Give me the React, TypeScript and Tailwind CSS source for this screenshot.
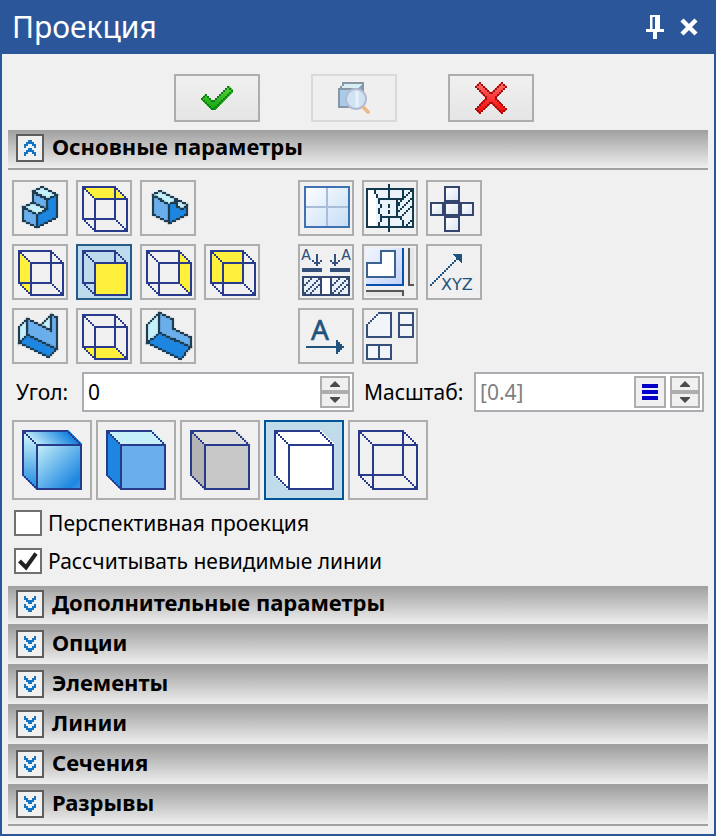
import React, { useState } from "react";

type Pt = [number, number];

/* Every drawing uses a coarse grid: one unit is two screen pixels. */

function cells(points: Pt[]): string {
  let d = "";
  for (let i = 0; i + 1 < points.length; i++) {
    let [x, y] = points[i];
    const [ex, ey] = points[i + 1];
    const dx = Math.abs(ex - x);
    const dy = -Math.abs(ey - y);
    const sx = x < ex ? 1 : -1;
    const sy = y < ey ? 1 : -1;
    let err = dx + dy;
    for (;;) {
      d += `M${x} ${y}h1v1h-1z`;
      if (x === ex && y === ey) break;
      const e2 = 2 * err;
      if (e2 >= dy) {
        err += dy;
        x += sx;
      }
      if (e2 <= dx) {
        err += dx;
        y += sy;
      }
    }
  }
  return d;
}

function Line({ pts, color }: { pts: Pt[]; color: string }) {
  return <path d={cells(pts)} fill={color} />;
}

function Box({ x, y, w, h, color, fill = "none" }: { x: number; y: number; w: number; h: number; color: string; fill?: string }) {
  return <rect x={x + 0.5} y={y + 0.5} width={w - 1} height={h - 1} fill={fill} stroke={color} />;
}

function Face({ pts, fill, edge }: { pts: Pt[]; fill: string; edge?: string }) {
  return (
    <g>
      <polygon points={pts.map(([x, y]) => `${x + 0.5},${y + 0.5}`).join(" ")} fill={fill} />
      {edge && (
        <>
          <polygon
            points={pts.map(([x, y]) => `${x + 0.5},${y + 0.5}`).join(" ")}
            fill="none"
            stroke={edge}
            strokeWidth={1.4}
            opacity={0.2}
            shapeRendering="auto"
          />
          <Line pts={[...pts, pts[0]]} color={edge} />
        </>
      )}
    </g>
  );
}

function Art({ w, h, className, children }: { w: number; h: number; className: string; children: React.ReactNode }) {
  return (
    <svg viewBox={`0 0 ${w} ${h}`} className={className} shapeRendering="crispEdges" aria-hidden="true">
      {children}
    </svg>
  );
}

const NAVY = "#283a8c";
const YELLOW = "#fff03c";
const INK = "#1f3c50";
const LIGHT = "#c6f0f9";
const MID = "#6aaeeb";
const DEEP = "#1c86e0";

function WireCube({ side }: { side: "top" | "left" | "front" | "right" | "back" | "bottom" }) {
  const faces: Record<string, Pt[]> = {
    top: [[2, 2], [18, 2], [24, 8], [8, 8]],
    left: [[2, 2], [8, 8], [8, 24], [2, 18]],
    front: [[8, 8], [24, 8], [24, 24], [8, 24]],
    right: [[18, 2], [24, 8], [24, 24], [18, 18]],
    back: [[2, 2], [18, 2], [18, 18], [2, 18]],
    bottom: [[2, 18], [18, 18], [24, 24], [8, 24]],
  };
  return (
    <>
      {side !== "front" && <Face pts={faces[side]} fill={YELLOW} />}
      <Box x={2} y={2} w={17} h={17} color={NAVY} />
      <Line pts={[[2, 2], [8, 8]]} color={NAVY} />
      <Line pts={[[18, 2], [24, 8]]} color={NAVY} />
      <Line pts={[[2, 18], [8, 24]]} color={NAVY} />
      <Line pts={[[18, 18], [24, 24]]} color={NAVY} />
      <Box x={8} y={8} w={17} h={17} color={NAVY} fill={side === "front" ? YELLOW : "none"} />
    </>
  );
}

function IsoStep() {
  return (
    <>
      <Face pts={[[16, 8], [21, 6], [21, 17], [11, 22], [11, 16], [16, 13]]} fill={DEEP} edge={INK} />
      <Face pts={[[9, 5], [16, 8], [16, 13], [9, 10]]} fill={MID} edge={INK} />
      <Face pts={[[9, 4], [14, 2], [21, 6], [16, 8]]} fill={LIGHT} edge={INK} />
      <Face pts={[[4, 12], [9, 10], [16, 13], [11, 16]]} fill={LIGHT} edge={INK} />
      <Face pts={[[4, 12], [11, 16], [11, 22], [4, 19]]} fill={MID} edge={INK} />
    </>
  );
}

function IsoNotch() {
  return (
    <>
      <Face pts={[[5, 6], [9, 4], [22, 11], [20, 13], [17, 12], [17, 9], [13, 11]]} fill={LIGHT} edge={INK} />
      <Face pts={[[5, 6], [13, 11], [13, 20], [5, 16]]} fill={MID} edge={INK} />
      <Face pts={[[13, 11], [16, 9], [17, 12], [20, 13], [22, 11], [22, 16], [13, 20]]} fill={DEEP} edge={INK} />
    </>
  );
}

function IsoVee() {
  return (
    <>
      <Face pts={[[13, 7], [18, 2], [18, 10]]} fill={LIGHT} edge={INK} />
      <Face pts={[[6, 4], [13, 7], [18, 10], [18, 2], [21, 3], [21, 19], [6, 12]]} fill={MID} edge={INK} />
      <Face pts={[[6, 12], [21, 19], [17, 23], [2, 16]]} fill={DEEP} edge={INK} />
      <Face pts={[[2, 8], [6, 4], [6, 12], [2, 16]]} fill={LIGHT} edge={INK} />
    </>
  );
}

function IsoEll() {
  return (
    <>
      <Face pts={[[8, 1], [15, 4], [15, 9], [24, 13], [24, 18], [8, 11]]} fill={MID} edge={INK} />
      <Face pts={[[8, 11], [24, 18], [19, 24], [2, 16]]} fill={DEEP} edge={INK} />
      <Face pts={[[2, 7], [8, 1], [8, 11], [2, 16]]} fill={LIGHT} edge={INK} />
    </>
  );
}

function WindowArt() {
  return (
    <>
      <defs>
        <linearGradient id="pane" x1="0" y1="0" x2="1" y2="1">
          <stop offset="0" stopColor="#ffffff" />
          <stop offset="1" stopColor="#c4dcf6" />
        </linearGradient>
      </defs>
      <rect x={2} y={2} width={23} height={21} fill="url(#pane)" />
      <rect x={13} y={3} width={1} height={19} fill="#a9bcd8" />
      <rect x={3} y={12} width={21} height={1} fill="#a9bcd8" />
      <Box x={2} y={2} w={23} h={21} color="#3f72b0" />
    </>
  );
}

function LocalSectionArt() {
  const c = "#12394e";
  return (
    <>
      <rect x={1} y={3} width={24} height={20} fill="#eaf2fa" />
      <rect x={2} y={4} width={4} height={18} fill="#ffffff" />
      <Box x={1} y={3} w={24} h={20} color={c} />
      <Line pts={[[5, 3], [5, 5], [6, 7], [7, 8], [7, 10], [8, 12], [7, 14], [8, 17], [8, 19], [6, 22]]} color={c} />
      <Line pts={[[19, 3], [19, 8], [18, 9], [16, 13], [16, 16], [19, 19], [19, 22]]} color={c} />
      <Line pts={[[7, 8], [19, 8]]} color={c} />
      <Line pts={[[8, 17], [18, 17]]} color={c} />
      <Line pts={[[16, 8], [16, 17]]} color={c} />
      <Line pts={[[19, 8], [23, 4]]} color={c} />
      <Line pts={[[17, 14], [24, 7]]} color={c} />
      <Line pts={[[18, 17], [24, 11]]} color={c} />
      <Line pts={[[20, 22], [24, 18]]} color={c} />
      <rect x={12} y={1} width={1} height={8} fill={c} />
      <rect x={12} y={11} width={1} height={2} fill={c} />
      <rect x={12} y={14} width={1} height={2} fill={c} />
      <rect x={12} y={17} width={1} height={8} fill={c} />
    </>
  );
}

function UnfoldArt() {
  const c = "#34456f";
  return (
    <>
      <defs>
        <linearGradient id="tile" x1="0" y1="0" x2="1" y2="1">
          <stop offset="0" stopColor="#ffffff" />
          <stop offset="1" stopColor="#dbe4f0" />
        </linearGradient>
      </defs>
      <Box x={8} y={2} w={8} h={8} color={c} fill="url(#tile)" />
      <Box x={8} y={9} w={8} h={8} color={c} fill="url(#tile)" />
      <Box x={8} y={17} w={8} h={8} color={c} fill="url(#tile)" />
      <Box x={1} y={10} w={7} h={7} color={c} fill="url(#tile)" />
      <Box x={16} y={10} w={7} h={7} color={c} fill="url(#tile)" />
      <rect x={8} y={9} width={8} height={2} fill={c} />
    </>
  );
}

function CutArt() {
  const c = "#34507a";
  return (
    <>
      <text x={0.6} y={7} fontSize={8} fill={c} className="font-['Liberation_Mono',monospace]">A</text>
      <text x={20.6} y={7} fontSize={8} fill={c} className="font-['Liberation_Mono',monospace]">A</text>
      <rect x={8} y={4} width={1} height={6} fill={c} />
      <Line pts={[[6, 7], [8, 9], [10, 7]]} color={c} />
      <rect x={17} y={4} width={1} height={6} fill={c} />
      <Line pts={[[15, 7], [17, 9], [19, 7]]} color={c} />
      <rect x={1} y={11} width={10} height={2} fill={c} />
      <rect x={15} y={11} width={10} height={2} fill={c} />
      <Box x={1} y={15} w={24} h={10} color="#34456f" fill="#e9eff6" />
      <rect x={11} y={16} width={4} height={8} fill="#ffffff" />
      <Line pts={[[10, 15], [10, 24]]} color="#34456f" />
      <Line pts={[[15, 15], [15, 24]]} color="#34456f" />
      <Line pts={[[1, 20], [5, 16]]} color={c} />
      <Line pts={[[1, 24], [9, 16]]} color={c} />
      <Line pts={[[5, 23], [10, 18]]} color={c} />
      <Line pts={[[15, 20], [19, 16]]} color={c} />
      <Line pts={[[16, 23], [23, 16]]} color={c} />
      <Line pts={[[19, 23], [24, 18]]} color={c} />
    </>
  );
}

function SheetArt() {
  return (
    <>
      <defs>
        <linearGradient id="sheet" x1="0" y1="0" x2="1" y2="1">
          <stop offset="0" stopColor="#f2f6ff" />
          <stop offset="1" stopColor="#c3d3f8" />
        </linearGradient>
      </defs>
      <rect x={1} y={1} width={18} height={18} fill="url(#sheet)" />
      <rect x={19} y={1} width={1} height={19} fill="#0a50b4" />
      <rect x={1} y={19} width={19} height={1} fill="#0a50b4" />
      <polygon points="8,2 16,2 16,16 1,16 1,8 8,8" fill="#ffffff" />
      <Line pts={[[1, 8], [8, 8], [8, 2], [15, 2], [15, 15], [1, 15], [1, 8]]} color="#3c6290" />
      <rect x={22} y={1} width={3} height={18} fill="#e6e6e6" />
      <rect x={22} y={1} width={1} height={19} fill="#575757" />
      <rect x={22} y={19} width={3} height={1} fill="#575757" />
      <rect x={1} y={22} width={18} height={3} fill="#e6e6e6" />
      <rect x={1} y={22} width={19} height={1} fill="#575757" />
      <rect x={19} y={22} width={1} height={3} fill="#575757" />
    </>
  );
}

function XyzArt() {
  const c = "#1f527c";
  return (
    <>
      <Line pts={[[1, 19], [14, 6]]} color={c} />
      <polygon points="12,4 17,4 17,9" fill={c} />
      <text x={6.5} y={22} fontSize={8} fill={c} className="font-['DejaVu_Sans',sans-serif]">XYZ</text>
    </>
  );
}

function ViewArrowArt() {
  const c = "#1f527c";
  return (
    <>
      <text x={5.5} y={15} fontSize={14} fill={c} stroke={c} strokeWidth={0.3} className="font-['Noto_Sans',sans-serif]">A</text>
      <rect x={3} y={18} width={16} height={1} fill={c} />
      <path d="M18 15h1v1h1v1h1v1h1v1h-1v1h-1v1h-1v1h-1z" fill={c} />
    </>
  );
}

function LayoutArt() {
  const c = "#34507a";
  const f = "#f1f5f9";
  return (
    <>
      <polygon points="7,1 14,1 14,14 1,14 1,7" fill={f} />
      <Line pts={[[1, 7], [7, 1], [13, 1], [13, 13], [1, 13], [1, 7]]} color={c} />
      <Box x={17} y={1} w={8} h={13} color={c} fill={f} />
      <rect x={17} y={7} width={8} height={1} fill={c} />
      <Box x={1} y={17} w={13} h={8} color={c} fill={f} />
      <rect x={7} y={17} width={1} height={8} fill={c} />
    </>
  );
}

function BigCube({ top, left, front }: { top: string; left: string; front: string }) {
  return (
    <>
      <polygon points="4,4 27,4 34,11 11,11" fill={top} />
      <polygon points="4,4 11,11 11,34 4,27" fill={left} />
      <Box x={11} y={11} w={23} h={23} color={NAVY} fill={front} />
      <Line pts={[[26, 4], [4, 4], [4, 26]]} color={NAVY} />
      <Line pts={[[4, 4], [11, 11]]} color={NAVY} />
      <Line pts={[[26, 4], [33, 11]]} color={NAVY} />
      <Line pts={[[4, 26], [11, 33]]} color={NAVY} />
    </>
  );
}

function ShadedCube() {
  return (
    <>
      <defs>
        <linearGradient id="shTop" x1="0.1" y1="0.6" x2="0.9" y2="0.4">
          <stop offset="0" stopColor={LIGHT} />
          <stop offset="0.85" stopColor={DEEP} />
        </linearGradient>
        <linearGradient id="shLeft" x1="0" y1="0" x2="0" y2="1">
          <stop offset="0.1" stopColor={LIGHT} />
          <stop offset="1" stopColor={DEEP} />
        </linearGradient>
        <linearGradient id="shFront" x1="0" y1="0" x2="1" y2="1">
          <stop offset="0" stopColor={LIGHT} />
          <stop offset="0.85" stopColor={DEEP} />
          <stop offset="1" stopColor="#4096e6" />
        </linearGradient>
      </defs>
      <BigCube top="url(#shTop)" left="url(#shLeft)" front="url(#shFront)" />
    </>
  );
}

function OpenCube() {
  return (
    <>
      <Box x={4} y={4} w={23} h={23} color={NAVY} />
      <Box x={11} y={11} w={23} h={23} color={NAVY} />
      <Line pts={[[4, 4], [11, 11]]} color={NAVY} />
      <Line pts={[[26, 4], [33, 11]]} color={NAVY} />
      <Line pts={[[4, 26], [11, 33]]} color={NAVY} />
      <Line pts={[[26, 26], [33, 33]]} color={NAVY} />
    </>
  );
}

function TickArt() {
  return (
    <>
      <defs>
        <linearGradient id="tick" x1="0" y1="0" x2="0" y2="1">
          <stop offset="0" stopColor="#5ad23c" />
          <stop offset="1" stopColor="#0fa50f" />
        </linearGradient>
      </defs>
      <polygon points="0,6 2,4 6,8 14,0 16,2 16,3 7,12 5,12 0,7" fill="url(#tick)" />
      <Line pts={[[0, 6], [2, 4], [5, 7], [6, 7], [13, 0], [15, 2], [6, 11], [5, 11], [0, 6]]} color="#0f7d14" />
    </>
  );
}

function CrossArt() {
  return (
    <>
      <defs>
        <linearGradient id="cross" x1="0" y1="0" x2="0" y2="1">
          <stop offset="0" stopColor="#ff7070" />
          <stop offset="0.6" stopColor="#ff2a2a" />
          <stop offset="1" stopColor="#f00808" />
        </linearGradient>
      </defs>
      <polygon points="2,0 8,5 13,0 16,2 11,8 16,14 13,16 8,11 2,16 0,14 5,8 0,2" fill="url(#cross)" />
      <Line
        pts={[[2, 0], [7, 5], [8, 5], [13, 0], [15, 2], [10, 7], [10, 8], [15, 13], [13, 15], [8, 10], [7, 10], [2, 15], [0, 13], [5, 8], [5, 7], [0, 2], [2, 0]]}
        color="#9c0f0f"
      />
    </>
  );
}

function PreviewArt() {
  return (
    <>
      <polygon points="1,3 3,1 12,1 10,3" fill="#d9eef2" />
      <polygon points="10,3 12,1 12,10 10,12" fill="#6fa6d4" />
      <Box x={0} y={3} w={11} h={10} color="#8796a3" fill="#a9cbe9" />
      <Line pts={[[1, 2], [2, 1], [2, 0], [12, 0], [12, 9]]} color="#8796a3" />
      <g shapeRendering="auto">
        <circle cx={9} cy={8.5} r={5} fill="#cfe3f2" stroke="#b4bbd2" />
        <path d="M9.500 4.500v8" stroke="#ebf3fa" strokeWidth={1.4} />
        <path d="M12.300 12.300l3.300 3.300" stroke="#eab887" strokeWidth={1.8} />
      </g>
    </>
  );
}

interface TileProps {
  label: string;
  on?: boolean;
  onClick?: () => void;
  children: React.ReactNode;
}

function Tile({ label, on, onClick, children }: TileProps) {
  return (
    <button
      type="button"
      aria-label={label}
      aria-pressed={on}
      onClick={onClick}
      className={`size-14 border-2 ${on ? "border-[#265a87] bg-[#bcdcee]" : "border-[#adadad] bg-[#f0f0f0]"}`}
    >
      <Art w={26} h={26} className="block size-full">{children}</Art>
    </button>
  );
}

function BigTile({ label, on, onClick, children }: TileProps) {
  return (
    <button
      type="button"
      aria-label={label}
      aria-pressed={on}
      onClick={onClick}
      className={`size-20 border-2 ${on ? "border-[#00549a] bg-[#c0dceb]" : "border-[#adadad] bg-[#f0f0f0]"}`}
    >
      <Art w={38} h={38} className="block size-full">{children}</Art>
    </button>
  );
}

function Section({ title, open, first, last }: { title: string; open?: boolean; first?: boolean; last?: boolean }) {
  const up = "M5 2h2v1h-2zM4 3h4v1h-4zM3 4h2v1h-2zM7 4h2v1h-2zM3 5h1v1h-1zM8 5h1v1h-1zM5 6h2v1h-2zM4 7h4v1h-4zM3 8h2v1h-2zM7 8h2v1h-2zM3 9h1v1h-1zM8 9h1v1h-1z";
  const down = "M3 2h1v1h-1zM8 2h1v1h-1zM3 3h2v1h-2zM7 3h2v1h-2zM4 4h4v1h-4zM5 5h2v1h-2zM3 6h1v1h-1zM8 6h1v1h-1zM3 7h2v1h-2zM7 7h2v1h-2zM4 8h4v1h-4zM5 9h2v1h-2z";
  return (
    <h2 className={`border-[#a0a0a0] ${first ? "" : "border-t-2"} ${last ? "border-b-2" : ""}`}>
      <button
        type="button"
        aria-expanded={!!open}
        className="flex h-[38px] w-full items-start gap-2 bg-linear-to-b from-[#a0a0a0] to-[#efefef] px-2 pt-1 text-left text-[22px] leading-6 font-bold text-black"
      >
        <span className="size-7 shrink-0 border-2 border-[#5e5e5e] bg-[#f0f0f0]">
          <Art w={12} h={12} className="block size-full">
            <path d={open ? up : down} fill="#1374c4" />
          </Art>
        </span>
        {title}
      </button>
    </h2>
  );
}

function Spinner({ name }: { name: string }) {
  const cls = "flex h-4 w-[30px] items-center justify-center border-2 border-[#adadad] bg-[#f0f0f0]";
  return (
    <span className="flex shrink-0 flex-col">
      <button type="button" aria-label={`${name} +`} className={cls}>
        <svg viewBox="0 0 10 6" className="h-1.5 w-2.5" aria-hidden="true">
          <path d="M5 0L10 5V6H0V5z" fill="#4c4c4c" />
        </svg>
      </button>
      <button type="button" aria-label={`${name} -`} className={cls}>
        <svg viewBox="0 0 10 6" className="h-1.5 w-2.5" aria-hidden="true">
          <path d="M5 6L10 1V0H0V1z" fill="#4c4c4c" />
        </svg>
      </button>
    </span>
  );
}

function Check({ id, label, initial }: { id: string; label: string; initial: boolean }) {
  const [checked, setChecked] = useState(initial);
  return (
    <div className="flex h-[26px] items-center gap-1.5">
      <span className="grid h-[26px] w-7 shrink-0">
        <input
          id={id}
          type="checkbox"
          checked={checked}
          onChange={(e) => setChecked(e.target.checked)}
          className="col-start-1 row-start-1 size-full appearance-none border-2 border-[#707070] bg-white"
        />
        {checked && (
          <svg viewBox="0 0 28 26" className="pointer-events-none col-start-1 row-start-1 size-full" aria-hidden="true">
            <path d="M5.500 13L12 19.500L22 5.500" fill="none" stroke="#222222" strokeWidth={4} />
          </svg>
        )}
      </span>
      <label htmlFor={id}>{label}</label>
    </div>
  );
}

const fieldBox = "flex h-10 min-w-0 items-center gap-1 border-2 border-[#abadb3] bg-white pr-0.5 pl-1";

export default function App() {
  const [view, setView] = useState("front");
  const [style, setStyle] = useState("hidden");
  const [angle, setAngle] = useState("0");
  const [scale, setScale] = useState("[0.4]");
  const v = (id: string) => ({ on: view === id, onClick: () => setView(id) });
  const s = (id: string) => ({ on: style === id, onClick: () => setStyle(id) });

  return (
    <main className="min-h-screen border-x-2 border-b-2 border-[#2b579a] bg-[#f0f0f0] font-['Noto_Sans','Open_Sans',sans-serif] text-[21px] leading-7 text-black">
      <header className="flex h-[54px] items-center justify-between bg-[#2b579a] pr-4 pl-2.5 text-white">
        <h1 className="text-[30px] leading-9">Проекция</h1>
        <div className="flex items-center gap-4">
          <button type="button" aria-label="Закрепить">
            <svg viewBox="0 0 18 24" className="block h-6 w-[18px]" aria-hidden="true">
              <path d="M4 0h10v14h4v3h-7v7H7v-7H0v-3h4zM6.500 2v12h2.500V2z" fill="#ffffff" fillRule="evenodd" />
            </svg>
          </button>
          <button type="button" aria-label="Закрыть">
            <svg viewBox="0 0 18 18" className="block size-[18px]" aria-hidden="true">
              <path d="M2 2L16 16M16 2L2 16" stroke="#ffffff" strokeWidth={4.400} />
            </svg>
          </button>
        </div>
      </header>

      <div className="px-1.5 pb-2">
        <div className="flex justify-center gap-[51px] pt-5 pr-2 pb-2">
          <button type="button" aria-label="Применить" className="flex h-12 w-[86px] items-center justify-center border-2 border-[#adadad] bg-linear-to-b from-[#f0f0f0] to-[#e5e5e5]">
            <Art w={16} h={12} className="h-6 w-8"><TickArt /></Art>
          </button>
          <button type="button" aria-label="Просмотр" disabled className="flex h-12 w-[86px] items-center justify-center border-2 border-[#d9d9d9] bg-[#efefef]">
            <Art w={16} h={16} className="size-8"><PreviewArt /></Art>
          </button>
          <button type="button" aria-label="Отмена" className="flex h-12 w-[86px] items-center justify-center border-2 border-[#adadad] bg-linear-to-b from-[#f0f0f0] to-[#e5e5e5]">
            <Art w={16} h={16} className="size-8"><CrossArt /></Art>
          </button>
        </div>

        <Section title="Основные параметры" open first last />

        <div className="px-1 pt-2.5 pb-3">
          <div className="flex gap-[38px]">
            <div className="grid grid-cols-[repeat(4,56px)] gap-2">
              <Tile label="Изометрия 1" {...v("iso1")}><IsoStep /></Tile>
              <Tile label="Сверху" {...v("top")}><WireCube side="top" /></Tile>
              <Tile label="Изометрия 2" {...v("iso2")}><IsoNotch /></Tile>
              <span />
              <Tile label="Слева" {...v("left")}><WireCube side="left" /></Tile>
              <Tile label="Спереди" {...v("front")}><WireCube side="front" /></Tile>
              <Tile label="Справа" {...v("right")}><WireCube side="right" /></Tile>
              <Tile label="Сзади" {...v("back")}><WireCube side="back" /></Tile>
              <Tile label="Изометрия 3" {...v("iso3")}><IsoVee /></Tile>
              <Tile label="Снизу" {...v("bottom")}><WireCube side="bottom" /></Tile>
              <Tile label="Изометрия 4" {...v("iso4")}><IsoEll /></Tile>
            </div>
            <div className="grid grid-cols-[repeat(3,56px)] gap-2">
              <Tile label="Стандартные виды"><WindowArt /></Tile>
              <Tile label="Местный разрез"><LocalSectionArt /></Tile>
              <Tile label="Развёртка"><UnfoldArt /></Tile>
              <Tile label="Разрез"><CutArt /></Tile>
              <Tile label="Лист"><SheetArt /></Tile>
              <Tile label="Система координат"><XyzArt /></Tile>
              <Tile label="Вид по стрелке"><ViewArrowArt /></Tile>
              <Tile label="Компоновка"><LayoutArt /></Tile>
            </div>
          </div>

          <div className="mt-2 grid grid-cols-[70px_272fr_120px_230fr] items-center">
            <label htmlFor="angle" className="pl-1">Угол:</label>
            <div className={fieldBox}>
              <input id="angle" value={angle} onChange={(e) => setAngle(e.target.value)} className="min-w-0 flex-1 bg-transparent outline-none" />
              <Spinner name="Угол" />
            </div>
            <label htmlFor="scale" className="pl-2.5">Масштаб:</label>
            <div className={fieldBox}>
              <input id="scale" value={scale} onChange={(e) => setScale(e.target.value)} className="min-w-0 flex-1 bg-transparent text-[#808080] outline-none" />
              <button type="button" aria-label="Список масштабов" className="flex size-8 shrink-0 flex-col items-center justify-center gap-0.5 border-2 border-[#adadad] bg-[#f0f0f0]">
                <span className="h-1 w-4 bg-[#0000c8]" />
                <span className="h-1 w-4 bg-[#0000c8]" />
                <span className="h-1 w-4 bg-[#0000c8]" />
              </button>
              <Spinner name="Масштаб" />
            </div>
          </div>

          <div className="mt-2 flex gap-1">
            <BigTile label="Закраска с тенями" {...s("shaded")}><ShadedCube /></BigTile>
            <BigTile label="Закраска" {...s("flat")}><BigCube top={LIGHT} left={DEEP} front={MID} /></BigTile>
            <BigTile label="Оттенки серого" {...s("grey")}><BigCube top="#dcdcdc" left="#b4b4b4" front="#c8c8c8" /></BigTile>
            <BigTile label="Без невидимых линий" {...s("hidden")}><BigCube top="#ffffff" left="#ffffff" front="#ffffff" /></BigTile>
            <BigTile label="Каркас" {...s("wire")}><OpenCube /></BigTile>
          </div>

          <div className="mt-2.5 flex flex-col gap-3 pl-0.5">
            <Check id="perspective" label="Перспективная проекция" initial={false} />
            <Check id="hiddenLines" label="Рассчитывать невидимые линии" initial />
          </div>
        </div>

        <Section title="Дополнительные параметры" first />
        <Section title="Опции" />
        <Section title="Элементы" />
        <Section title="Линии" />
        <Section title="Сечения" />
        <Section title="Разрывы" last />
      </div>
    </main>
  );
}
